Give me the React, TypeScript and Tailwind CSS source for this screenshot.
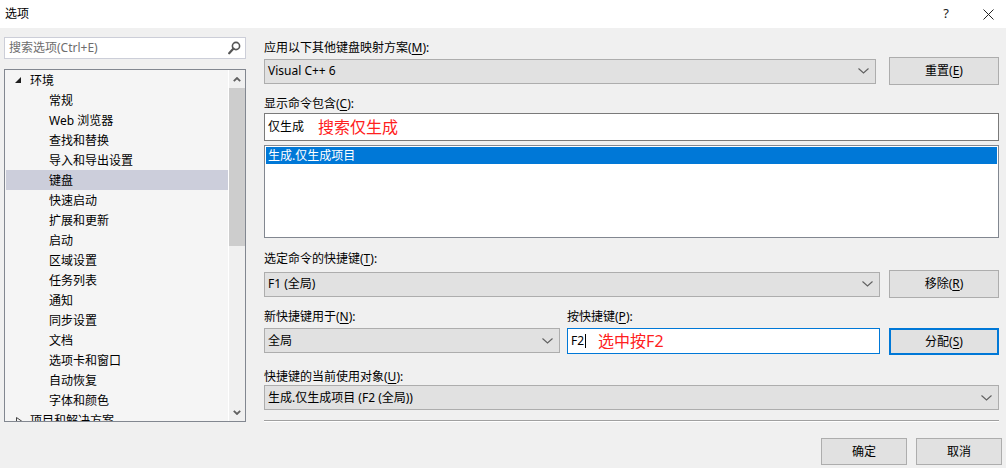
import React from "react";

const Chevron = () => (
  <svg width="11" height="6" viewBox="0 0 11 6" className="shrink-0">
    <polyline points="0.5,0.5 5.5,5 10.5,0.5" fill="none" stroke="#606060" strokeWidth="1.1" />
  </svg>
);

const Combo = ({ text, w, h = 25 }: { text: string; w: string; h?: number }) => (
  <div
    className={`${w} flex items-center justify-between border border-[#adadad] bg-[#e1e1e1] pl-[3px] pr-[6px] text-[12px] text-black`}
    style={{ height: h }}
  >
    <span className="whitespace-nowrap">{text}</span>
    <Chevron />
  </div>
);

const Btn = ({ children, focus = false, w = "w-[110px]", h = "h-[28px]" }: { children: React.ReactNode; focus?: boolean; w?: string; h?: string }) => (
  <div
    className={`${w} ${h} shrink-0 flex items-center justify-center bg-[#e1e1e1] text-[12px] text-black ${
      focus ? "border-2 border-[#0078d7]" : "border border-[#adadad]"
    }`}
  >
    {children}
  </div>
);

const Label = ({ children }: { children: React.ReactNode }) => (
  <div className="h-[16px] leading-[19px] text-[12px] text-black whitespace-nowrap">{children}</div>
);

const U = ({ c }: { c: string }) => <span className="underline underline-offset-2">{c}</span>;

const items = [
  "常规",
  "Web 浏览器",
  "查找和替换",
  "导入和导出设置",
  "键盘",
  "快速启动",
  "扩展和更新",
  "启动",
  "区域设置",
  "任务列表",
  "通知",
  "同步设置",
  "文档",
  "选项卡和窗口",
  "自动恢复",
  "字体和颜色",
];

export default function App() {
  return (
    <div
      className="w-[1006px] h-[468px] overflow-hidden flex flex-col bg-[#f0f0f0] text-black"
      style={{ fontFamily: '"Noto Sans", "Noto Sans CJK SC", sans-serif' }}
    >
      {/* Title bar */}
      <div className="h-[28px] bg-white flex items-center shrink-0">
        <span className="ml-[5px] text-[12px]">选项</span>
        <div className="flex-1" />
        <span className="text-[13px] mr-[34px] text-[#222]">?</span>
        <svg width="11" height="11" viewBox="0 0 11 11" className="mr-[12px]">
          <line x1="0.5" y1="0.5" x2="10.5" y2="10.5" stroke="#222" strokeWidth="1" />
          <line x1="10.5" y1="0.5" x2="0.5" y2="10.5" stroke="#222" strokeWidth="1" />
        </svg>
      </div>

      <div className="flex flex-1 min-h-0">
        {/* Left column */}
        <div className="w-[242px] ml-[4px] flex flex-col pt-[9px] shrink-0">
          <div className="h-[22px] border border-[#ccced8] bg-white flex items-center pl-[4px] pr-[4px]">
            <span className="text-[12px] text-[#6d6d6d] flex-1">搜索选项(Ctrl+E)</span>
            <svg width="13" height="14" viewBox="0 0 13 14">
              <circle cx="8" cy="5" r="3.6" fill="none" stroke="#555" strokeWidth="1.6" />
              <line x1="5.5" y1="7.6" x2="1.2" y2="12.3" stroke="#555" strokeWidth="2.2" strokeLinecap="round" />
            </svg>
          </div>
          <div className="mt-[10px] h-[353px] border border-[#828790] bg-[#f5f5f5] flex overflow-hidden">
            <div className="flex-1 overflow-hidden text-[12px]">
              <div className="h-[20px] flex items-center pt-[2px]">
                <svg width="6" height="6" viewBox="0 0 6 6" className="ml-[10px] mr-[9px] -mt-[2px]">
                  <polygon points="6,0 6,6 0,6" fill="#1e1e1e" />
                </svg>
                <span>环境</span>
              </div>
              {items.map((t) => (
                <div
                  key={t}
                  className={`h-[20px] flex items-center pt-[2px] pl-[43px] ml-[1px] ${t === "键盘" ? "bg-[#cccedb]" : ""}`}
                >
                  {t}
                </div>
              ))}
              <div className="h-[20px] flex items-center pt-[2px]">
                <svg width="6" height="8" viewBox="0 0 6 8" className="ml-[11px] mr-[8px]">
                  <polygon points="0.5,0.5 5.5,4 0.5,7.5" fill="none" stroke="#444" strokeWidth="1" />
                </svg>
                <span>项目和解决方案</span>
              </div>
            </div>
            <div className="w-[17px] shrink-0 bg-[#f0f0f0] border-l border-white flex flex-col">
              <div className="h-[18px] flex items-center justify-center">
                <svg width="8" height="5" viewBox="0 0 8 5">
                  <polyline points="0.8,4.2 4,1 7.2,4.2" fill="none" stroke="#606060" strokeWidth="1.8" />
                </svg>
              </div>
              <div className="h-[158px] bg-[#cdcdcd]" />
              <div className="flex-1" />
              <div className="h-[18px] flex items-center justify-center">
                <svg width="8" height="5" viewBox="0 0 8 5">
                  <polyline points="0.8,0.8 4,4 7.2,0.8" fill="none" stroke="#606060" strokeWidth="1.8" />
                </svg>
              </div>
            </div>
          </div>
        </div>

        {/* Right column */}
        <div className="ml-[18px] flex-1 flex flex-col pt-[10px] pr-[4px]">
          <div className="w-[735px] flex flex-col">
            <Label>
              应用以下其他键盘映射方案(<U c="M" />):
            </Label>
            <div className="mt-[3px] flex items-center gap-[13px]">
              <Combo text="Visual C++ 6" w="w-[612px]" />
              <Btn>
                重置(<U c="E" />)
              </Btn>
            </div>

            <div className="mt-[9px]">
              <Label>
                显示命令包含(<U c="C" />):
              </Label>
            </div>
            <div className="mt-[3px] h-[28px] border border-[#7a7a7a] bg-white flex items-center pl-[3px] text-[12px]">
              <span>仅生成</span>
              <span className="ml-[14px] text-[16px] text-[#ff2020]">搜索仅生成</span>
            </div>
            <div className="mt-[4px] h-[93px] border border-[#828790] bg-white p-[1px]">
              <div className="h-[17px] bg-[#0078d7] text-white text-[12px] leading-[17px] pl-[2px]">生成.仅生成项目</div>
            </div>

            <div className="mt-[11px]">
              <Label>
                选定命令的快捷键(<U c="T" />):
              </Label>
            </div>
            <div className="mt-[5px] flex items-center gap-[9px]">
              <Combo text="F1 (全局)" w="w-[616px]" />
              <Btn>
                移除(<U c="R" />)
              </Btn>
            </div>

            <div className="mt-[9px] flex">
              <div className="w-[303px]">
                <Label>
                  新快捷键用于(<U c="N" />):
                </Label>
              </div>
              <Label>
                按快捷键(<U c="P" />):
              </Label>
            </div>
            <div className="mt-[5px] flex items-start">
              <Combo text="全局" w="w-[296px]" />
              <div className="ml-[7px] w-[313px] h-[26px] border border-[#0078d7] bg-white flex items-center pl-[3px] text-[12px]">
                <span>F2</span>
                <span className="w-px h-[14px] bg-black ml-[1px]" />
                <span className="ml-[12px] text-[16px] text-[#ff2020]">选中按F2</span>
              </div>
              <div className="ml-[9px]">
                <Btn focus h="h-[27px]">
                  分配(<U c="S" />)
                </Btn>
              </div>
            </div>

            <div className="mt-[12px]">
              <Label>
                快捷键的当前使用对象(<U c="U" />):
              </Label>
            </div>
            <div className="mt-[2px]">
              <Combo text="生成.仅生成项目 (F2 (全局))" w="w-[735px]" />
            </div>
            <div className="mt-[10px] h-px bg-[#a0a0a0]" />
            <div className="h-px bg-white" />
          </div>
          <div className="mt-[16px] flex justify-end gap-[9px]">
            <Btn w="w-[86px]" h="h-[27px]">确定</Btn>
            <Btn w="w-[86px]" h="h-[27px]">取消</Btn>
          </div>
        </div>
      </div>
    </div>
  );
}
